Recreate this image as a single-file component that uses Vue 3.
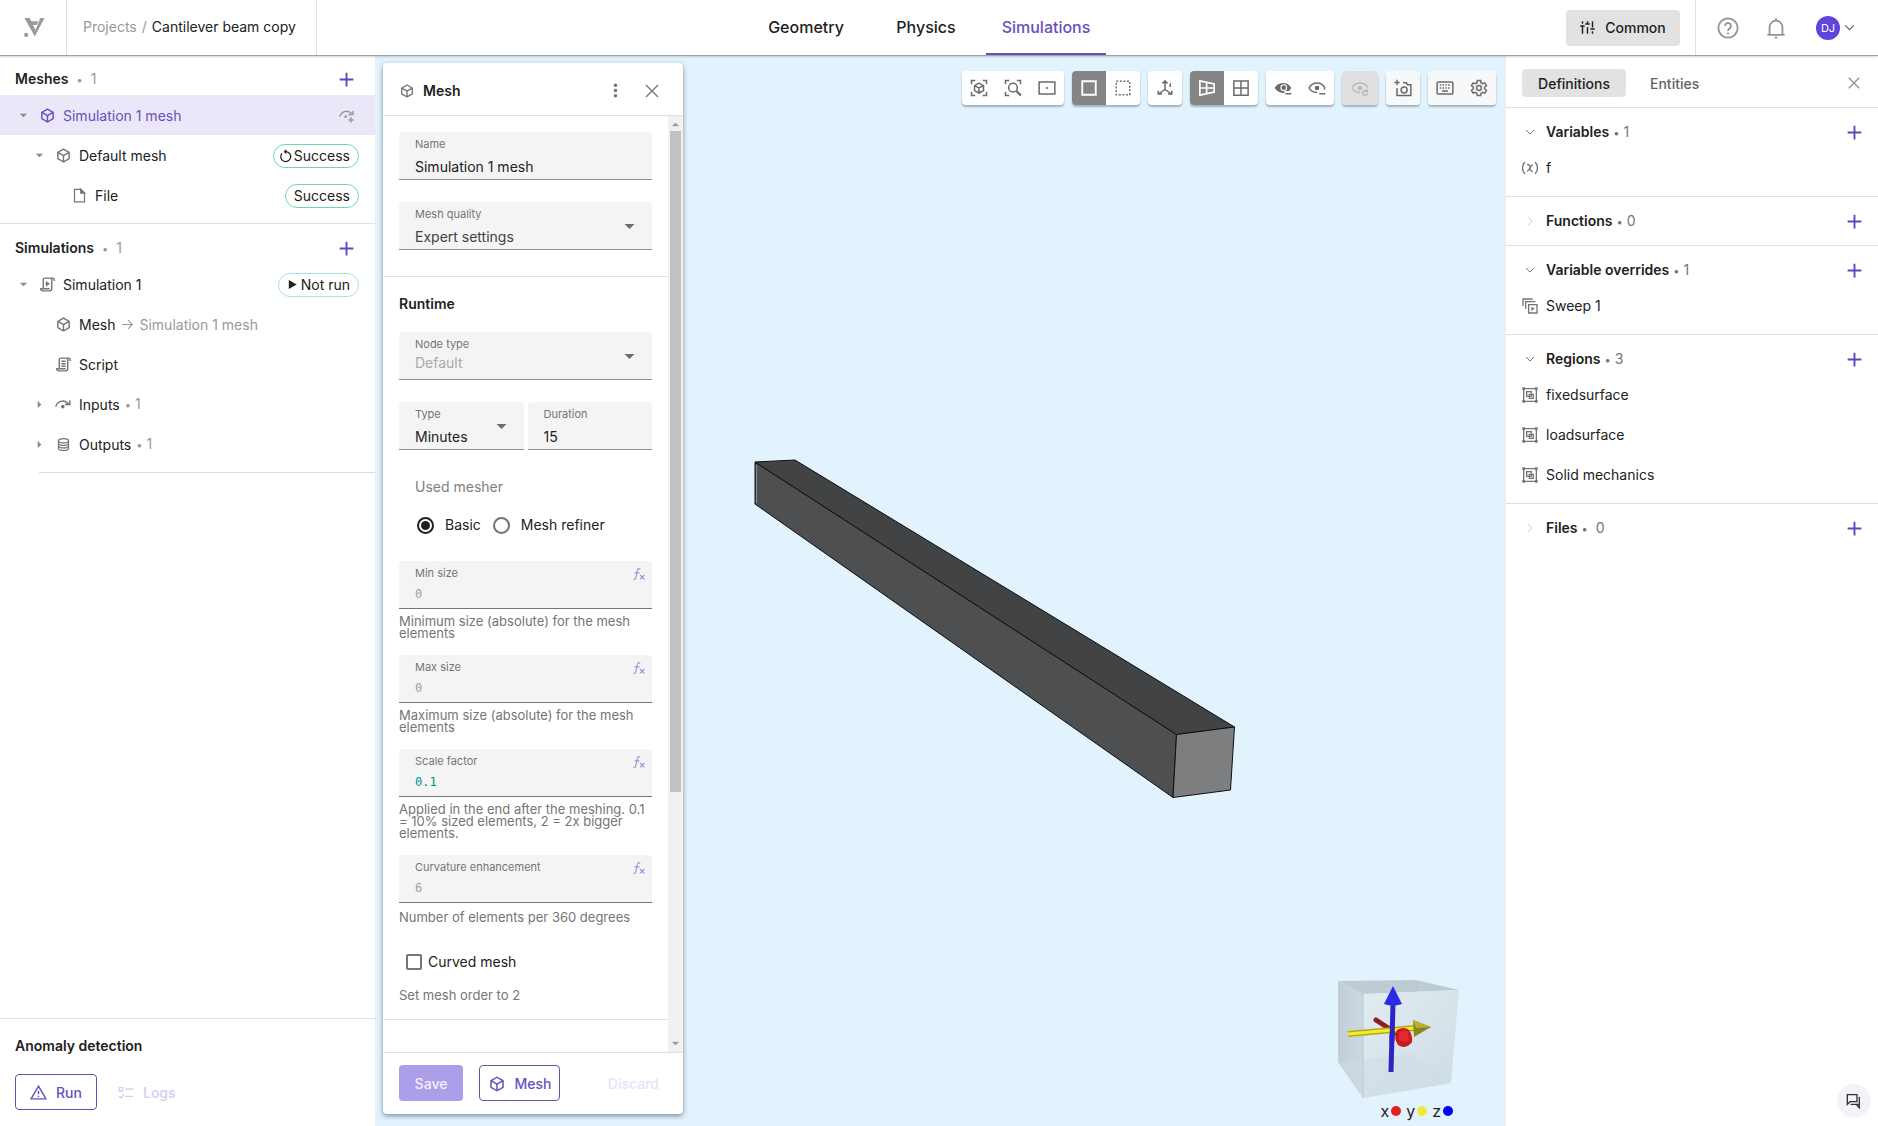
<script setup>
import { h, ref } from 'vue'

const cube = '<path fill="currentColor" stroke="none" d="M21,16.5C21,16.88 20.79,17.21 20.47,17.38L12.57,21.82C12.41,21.94 12.21,22 12,22C11.79,22 11.59,21.94 11.43,21.82L3.53,17.38C3.21,17.21 3,16.88 3,16.5V7.5C3,7.12 3.21,6.79 3.53,6.62L11.43,2.18C11.59,2.06 11.79,2 12,2C12.21,2 12.41,2.06 12.57,2.18L20.47,6.62C20.79,6.79 21,7.12 21,7.5V16.5M12,4.15L6.04,7.5L12,10.85L17.96,7.5L12,4.15M5,15.91L11,19.29V12.58L5,9.21V15.91M19,15.91V9.21L13,12.58V19.29L19,15.91Z"/>'
const corners = '<path d="M2 7V2h5M17 2h5v5M22 17v5h-5M7 22H2v-5"/>'
const scroll = '<path d="M6 18V5a2 2 0 0 1 2-2h11a2.5 2.5 0 0 1 2.5 2.5V7M18 3v15a3 3 0 0 1-3 3H5a2.5 2.5 0 0 1-2.5-2.5V18H14v1"/>'

const icons = {
  cube,
  logo: '<g fill="currentColor" stroke="none"><path d="M1.5 2h5.5l6 12.5L18 2h4.5L12.300 21.5z"/><path d="M5 5.5h11l-1.800 4H9.5l3.5 6-2 2.5z"/><circle cx="3.300" cy="19.700" r="2.200"/></g>',
  plus: '<path stroke-width="3" d="M12 1v22M1 12h22"/>',
  caretDown: '<path fill="currentColor" stroke="none" d="M4 8h16l-8 8z"/>',
  caretRight: '<path fill="currentColor" stroke="none" d="M8 4v16l8-8z"/>',
  chevronDown: '<path d="m4 8 8 8 8-8"/>',
  chevronRight: '<path d="m8 4 8 8-8 8"/>',
  file: '<path d="M4 2h10l6 6v14H4z"/><path fill="currentColor" d="M14 2v6h6z"/>',
  restart: '<path stroke-width="2.200" d="M5 7.500a8.500 8.500 0 1 0 7-3"/><path fill="currentColor" stroke="none" d="M12.500 0v9L8 4.500z"/>',
  play: '<path fill="currentColor" stroke="none" d="M4 2v20l17-10z"/>',
  scriptRun: scroll + '<path fill="currentColor" stroke="none" d="M9.500 7v8l6-4z"/>',
  script: scroll + '<path d="M9 7.500h6M9 11h6M9 14.500h6"/>',
  arrow: '<path d="M2 12h19M13 4l8 8-8 8"/>',
  input: '<path d="M1 15C3 8 12 3 20 12M14 12h7V6"/><circle cx="11" cy="15" r="1.500" fill="currentColor"/>',
  inputAdd: '<path d="M1 13C3 6 12 1 20 9M14 10h7V4M18 14v8M14 18h8"/><circle cx="10" cy="13" r="1" fill="currentColor"/>',
  database: '<ellipse cx="12" cy="6" rx="8" ry="3.500"/><path d="M4 6v12c0 2 4 3.500 8 3.500s8-1.500 8-3.500V6M4 10c0 2 4 3.500 8 3.500s8-1.500 8-3.500M4 14c0 2 4 3.500 8 3.500s8-1.500 8-3.500"/>',
  alert: '<path d="M12 3 1.500 21h21zM12 9.500v5M12 16.500v2"/>',
  logs: '<path d="M2 4h5v5H2zM11 6h12M11 17h12M1.500 16.500l3 3L9 14"/>',
  tune: '<path stroke-width="2.300" d="M4 2v4M4 10v12M.5 9.500h7M12 2v5M12 11v11M8.500 6.500h7M20 2v10M20 18v4M16.500 14.500h7"/>',
  help: '<circle cx="12" cy="12" r="10.500"/><path d="M8.800 9.800a3.200 3.200 0 1 1 5.500 2.200c-1.200 1.100-2.300 1.600-2.300 3.200M12 17v2"/>',
  bell: '<path d="M2.500 19.500h19M5 19V11a7 7 0 0 1 14 0v8M12 4V1M10.500 22.500h3"/>',
  close: '<path d="m3 3 18 18M21 3 3 21"/>',
  dots: '<g fill="currentColor" stroke="none"><circle cx="12" cy="3.500" r="2.800"/><circle cx="12" cy="12" r="2.800"/><circle cx="12" cy="20.500" r="2.800"/></g>',
  fx: '<path stroke-width="2.200" d="M1 20.500c3 1.500 4-1 5-6L8 5c.7-3.500 3-4.500 5.500-3M3 9h9M13 13l8 8M21 13l-8 8"/>',
  cubeScan: corners + '<path d="m12 5.500 6 3.300v6.600L12 18.700l-6-3.300V8.800zM6 8.800l6 3.200 6-3.200M12 12v6.700"/>',
  zoomScan: '<path d="M2 7V2h5M17 2h5v5M7 22H2v-5"/><circle cx="12" cy="11.500" r="5.800"/><path stroke-width="3" d="m16.500 16 6 6"/>',
  frame: '<path d="M1.500 4h21v16h-21z"/><circle cx="12" cy="12" r="1" fill="currentColor" stroke-width="1"/>',
  square: '<path stroke-width="2.500" d="M3 3h18v18H3z"/>',
  dotted: '<path stroke-dasharray="2.600 2.200" d="M3 3h18v18H3z"/>',
  axes: '<path d="M12 14V3M8.500 6 12 2.500 15.500 6M12 14l-9 6M3 15.500V20h5M12 14l9 6M21 15.500V20h-5M19 5.500v5M19 2.500V3"/>',
  perspective: '<path stroke-width="2.200" d="m2.500 2.500 19 4v11l-19 4zM2.500 12h19M11.500 4.500v15"/>',
  grid: '<path d="M2.500 2.500h19v19h-19zM12 2.500v19M2.500 12h19"/>',
  eyeSolid: '<path d="M1 12c4-9 18-9 22 0-2 4-5 6-9 6.500-6 .5-10.500-2-13-6.500z" fill="currentColor" stroke="none"/><circle cx="13" cy="11.500" r="3.800" stroke="#fff" fill="currentColor" stroke-width="1.500"/><path stroke="#fff" stroke-width="5" d="M14 18.500h10"/><path d="M15 19.500h8"/>',
  eye: '<path d="M12 18C7 18 3.500 16 1.500 12c4-9 17-9 21 0l-1 2M15 19.500h8"/><circle cx="12" cy="12" r="3" fill="currentColor" stroke="none"/>',
  eyeReset: '<path d="M12 18C7 18 3.500 16 1.500 12c4-9 17-9 21 0"/><circle cx="12" cy="12" r="3" fill="currentColor" stroke="none"/><path d="M20.500 16a3.200 3.200 0 1 0 1.500 3M21.500 13.500v3h-3"/>',
  camera: '<path d="M4 12v10h18.500V7.500H18L16.500 5H12M4 1v7M.500 4.500h7"/><circle cx="13.500" cy="14.500" r="4"/>',
  keyboard: '<rect x="1.500" y="4" width="21" height="16" rx="1.500"/><path stroke-dasharray="2 1.700" d="M5 8h15M5 12h15"/><path d="M8 16h8"/>',
  gear: '<path d="M9.800 2h4.400l.6 3.200 2 1.100 3-1.200 2.200 3.800-2.500 2.100v2l2.500 2.100-2.200 3.800-3-1.100-2 1.100-.6 3.100H9.800l-.6-3.100-2-1.100-3 1.100L2 15.100 4.500 13v-2L2 8.900l2.200-3.800 3 1.200 2-1.100z"/><circle cx="12" cy="12" r="3.200"/>',
  variable: '<path d="M4.500 3c-5 5-5 13 0 18M19.500 3c5 5 5 13 0 18M7.500 7c3.500-1 4.500 2 4.500 5s1 5 4.500 5M16.500 7c-3.500 0-5.500 9-9 10"/>',
  sweep: '<path d="M1.500 12V1.500H16M5.500 16V5.500H20M10 10h12.500v12.500H10z"/><path fill="currentColor" stroke="none" d="M14 13v6.500l5-3.200z"/>',
  region: '<path d="M2.500 2.500h19v19h-19z"/><path d="M7 7h7v7H7zM11 11h6v6h-6z"/><path stroke-width="4" d="M.500 2.500h4M19.500 2.500h4M.500 21.500h4M19.500 21.500h4"/>',
  chat: '<path d="M2 2.500h14.500V13H6l-4 4zM20 6v11H7M20 7v15l-4-4"/>'
}

const Icon = (props) => h('svg', {
  viewBox: '0 0 24 24',
  width: props.size || 17,
  height: props.size || 17,
  fill: 'none',
  stroke: 'currentColor',
  'stroke-width': 2,
  'aria-hidden': 'true',
  innerHTML: icons[props.name]
})
Icon.props = ['name', 'size']

const meshRows = [
  { level: 0, caret: 'caretDown', icon: 'cube', label: 'Simulation 1 mesh', selected: true },
  { level: 1, caret: 'caretDown', icon: 'cube', label: 'Default mesh', status: 'Success', statusIcon: 'restart' },
  { level: 2, icon: 'file', label: 'File', status: 'Success' }
]
const simulationRows = [
  { level: 0, caret: 'caretDown', icon: 'scriptRun', label: 'Simulation 1', status: 'Not run', statusIcon: 'play' },
  { level: 1, icon: 'cube', label: 'Mesh', target: 'Simulation 1 mesh' },
  { level: 1, icon: 'script', label: 'Script' },
  { level: 1, caret: 'caretRight', icon: 'input', label: 'Inputs', count: 1 },
  { level: 1, caret: 'caretRight', icon: 'database', label: 'Outputs', count: 1 }
]
const trees = [
  { title: 'Meshes', rows: meshRows },
  { title: 'Simulations', rows: simulationRows }
]

const definitions = [
  { title: 'Variables', count: 1, icon: 'variable', items: ['f'] },
  { title: 'Functions', count: 0, items: [] },
  { title: 'Variable overrides', count: 1, icon: 'sweep', items: ['Sweep 1'] },
  { title: 'Regions', count: 3, icon: 'region', items: ['fixedsurface', 'loadsurface', 'Solid mechanics'] },
  { title: 'Files', count: 0, spaced: true, items: [] }
]

const toolGroups = [
  [{ icon: 'cubeScan', label: 'Fit view' }, { icon: 'zoomScan', label: 'Zoom to selection' }, { icon: 'frame', label: 'Center' }],
  [{ icon: 'square', label: 'Solid', active: true }, { icon: 'dotted', label: 'Transparent' }],
  [{ icon: 'axes', label: 'Axes' }],
  [{ icon: 'perspective', label: 'Perspective', active: true }, { icon: 'grid', label: 'Orthographic' }],
  [{ icon: 'eyeSolid', label: 'Hide selected' }, { icon: 'eye', label: 'Hide others' }],
  [{ icon: 'eyeReset', label: 'Reset visibility', disabled: true }],
  [{ icon: 'camera', label: 'Screenshot', soft: true }],
  [{ icon: 'keyboard', label: 'Shortcuts', soft: true }, { icon: 'gear', label: 'Settings', soft: true }]
]

const form = ref({ name: 'Simulation 1 mesh', duration: '15', mesher: 'basic', curved: false })
const sizes = ref([
  { id: 'min', label: 'Min size', value: '', placeholder: '0', hint: 'Minimum size (absolute) for the mesh elements' },
  { id: 'max', label: 'Max size', value: '', placeholder: '0', hint: 'Maximum size (absolute) for the mesh elements' },
  { id: 'scale', label: 'Scale factor', value: '0.1', placeholder: '1', hint: 'Applied in the end after the meshing. 0.1 = 10% sized elements, 2 = 2x bigger elements.' },
  { id: 'curvature', label: 'Curvature enhancement', value: '', placeholder: '6', hint: 'Number of elements per 360 degrees', short: true }
])
</script>

<template>
  <div class="app">
    <header class="topbar">
      <div class="topbar-left">
        <a class="logo" href="#" aria-label="Home"><Icon name="logo" :size="23" /></a>
        <nav class="crumbs"><a href="#">Projects</a><span>/</span><strong>Cantilever beam copy</strong></nav>
      </div>
      <nav class="main-tabs">
        <a href="#">Geometry</a>
        <a href="#">Physics</a>
        <a href="#" class="active">Simulations</a>
      </nav>
      <div class="topbar-right">
        <button class="common" type="button"><Icon name="tune" :size="15" />Common</button>
        <div class="account">
          <button type="button" aria-label="Help"><Icon name="help" :size="22" /></button>
          <button type="button" aria-label="Notifications"><Icon name="bell" :size="22" /></button>
          <button type="button" class="user"><span class="avatar">DJ</span><Icon name="chevronDown" :size="13" /></button>
        </div>
      </div>
    </header>

    <div class="workspace">
      <aside class="sidebar">
        <section v-for="tree in trees" :key="tree.title" class="tree">
          <header class="tree-head">
            <h2>{{ tree.title }}</h2><span class="count wide"><i>•</i>1</span>
            <button type="button" class="add" :aria-label="'Add to ' + tree.title"><Icon name="plus" :size="15" /></button>
          </header>
          <div v-for="row in tree.rows" :key="row.label" class="tree-row" :class="['level-' + row.level, { selected: row.selected }]">
            <span class="caret"><Icon v-if="row.caret" :name="row.caret" :size="11" /></span>
            <Icon :name="row.icon" class="row-icon" :size="row.icon === 'database' || row.icon === 'file' ? 15 : 17" :class="{ small: row.icon === 'database' || row.icon === 'file' }" />
            <span class="row-label">{{ row.label }}</span>
            <span v-if="row.target" class="target"><Icon name="arrow" :size="13" />{{ row.target }}</span>
            <span v-if="row.count" class="count"><i>•</i>{{ row.count }}</span>
            <Icon v-if="row.selected" name="inputAdd" :size="16" class="row-action" />
            <span v-if="row.status" class="pill" :class="{ pending: row.status === 'Not run' }">
              <Icon v-if="row.statusIcon" :name="row.statusIcon" :size="row.statusIcon === 'play' ? 11 : 14" />{{ row.status }}
            </span>
          </div>
        </section>
        <section class="anomaly">
          <h2>Anomaly detection</h2>
          <div class="anomaly-actions">
            <button type="button" class="btn outline"><Icon name="alert" :size="17" />Run</button>
            <button type="button" class="btn ghost" disabled><Icon name="logs" :size="16" />Logs</button>
          </div>
        </section>
      </aside>

      <main class="viewport">
        <svg class="scene" viewBox="376 55 1129 1071" role="img" aria-label="Cantilever beam">
          <g stroke="#0c1012" stroke-width="1" stroke-linejoin="round">
            <path fill="#4e4f50" d="M755 462 1176.500 734.500 1173 797.500 755 504z" />
            <path fill="#424344" d="M755 462 795 460 1234.500 727 1176.500 734.500z" />
            <path fill="#7d7e7f" d="M1176.500 734.500 1234.500 727 1230.500 790 1173 797.500z" />
          </g>
          <path d="M756.500 465v38" stroke="#7b9296" />
        </svg>

        <div class="toolbar">
          <div v-for="(group, i) in toolGroups" :key="i" class="tool-group">
            <button v-for="tool in group" :key="tool.icon" type="button" :aria-label="tool.label" :disabled="tool.disabled" :class="{ active: tool.active, soft: tool.soft }">
              <Icon :name="tool.icon" :size="18" />
            </button>
          </div>
        </div>

        <section class="dialog">
          <header class="dialog-head">
            <Icon name="cube" :size="16" />
            <h2>Mesh</h2>
            <button type="button" aria-label="More"><Icon name="dots" :size="15" /></button>
            <button type="button" aria-label="Close"><Icon name="close" :size="16" /></button>
          </header>
          <div class="dialog-body">
            <form id="mesh-form" class="form" @submit.prevent>
              <div class="form-section first">
                <div class="field">
                  <label for="name">Name</label>
                  <input id="name" v-model="form.name" type="text" />
                </div>
                <div class="field muted">
                  <label for="quality">Mesh quality</label>
                  <select id="quality"><option>Expert settings</option></select>
                  <Icon name="caretDown" :size="15" class="field-caret" />
                </div>
              </div>
              <div class="form-section">
                <h3>Runtime</h3>
                <div class="field disabled">
                  <label for="node">Node type</label>
                  <select id="node" disabled><option>Default</option></select>
                  <Icon name="caretDown" :size="15" class="field-caret" />
                </div>
                <div class="pair">
                  <div class="field">
                    <label for="type">Type</label>
                    <select id="type"><option>Minutes</option></select>
                    <Icon name="caretDown" :size="15" class="field-caret" />
                  </div>
                  <div class="field">
                    <label for="duration">Duration</label>
                    <input id="duration" v-model="form.duration" type="text" />
                  </div>
                </div>
                <fieldset class="mesher">
                  <legend>Used mesher</legend>
                  <label><input v-model="form.mesher" type="radio" name="mesher" value="basic" />Basic</label>
                  <label><input v-model="form.mesher" type="radio" name="mesher" value="refiner" />Mesh refiner</label>
                </fieldset>
                <div v-for="size in sizes" :key="size.id" class="size">
                  <div class="field code">
                    <label :for="size.id">{{ size.label }}</label>
                    <input :id="size.id" v-model="size.value" type="text" :placeholder="size.placeholder" :aria-describedby="size.id + '-hint'" />
                    <Icon name="fx" :size="13" class="fx" />
                  </div>
                  <p :id="size.id + '-hint'" class="hint" :class="{ short: size.short }">{{ size.hint }}</p>
                </div>
                <label class="check"><input v-model="form.curved" type="checkbox" />Curved mesh</label>
                <p class="hint short">Set mesh order to 2</p>
              </div>
            </form>
            <div class="scrollbar" aria-hidden="true">
              <Icon name="caretDown" :size="11" class="up" />
              <div class="track"><div class="thumb"></div></div>
              <Icon name="caretDown" :size="11" />
            </div>
          </div>
          <footer class="dialog-foot">
            <button type="submit" form="mesh-form" class="btn save" disabled>Save</button>
            <button type="button" class="btn outline mesh"><Icon name="cube" :size="18" />Mesh</button>
            <button type="button" class="btn ghost discard" disabled>Discard</button>
          </footer>
        </section>

        <div class="orientation">
          <svg viewBox="1332 974 134 126" width="134" height="126" aria-hidden="true">
            <defs>
              <linearGradient id="side" x1="0" x2="1"><stop offset="0" stop-color="#c3ced6" /><stop offset="1" stop-color="#ccd8df" /></linearGradient>
              <linearGradient id="front" x1="0" x2="1" y1="0" y2="1"><stop offset="0" stop-color="#e0ebf2" /><stop offset="1" stop-color="#cfdbe2" /></linearGradient>
            </defs>
            <path fill="#bfcbd3" d="M1338 980 1416 979 1459 989 1363 993z" />
            <path fill="url(#side)" d="M1338 980 1363 993V1097L1338 1061z" />
            <path fill="url(#front)" d="M1363 993 1459 989 1451 1082 1363 1097z" />
            <path fill="#d0dce3" opacity=".5" d="M1338 1061 1413 1053 1451 1082 1363 1097z" />
            <path fill="none" stroke="#b4c0c9" stroke-width="1" opacity=".7" d="M1416 979v12M1363 993v104" />
            <path stroke="#8e2020" stroke-width="5" stroke-linecap="round" d="m1376 1019 20 13" />
            <path stroke="#2b25c4" stroke-width="5" d="m1391 1071 1-38" />
            <path stroke="#b3aa11" stroke-width="6" d="m1348 1033 67-6" />
            <path stroke="#f2ea35" stroke-width="3" d="m1348 1033 67-6" />
            <path fill="#8b861b" d="m1413 1019 18 7-17 10z" />
            <path fill="#b8b12a" d="m1413 1019 18 7-15 1z" />
            <path stroke="#2b25c4" stroke-width="5" d="m1392 1040 1-38" />
            <path fill="#2a2be6" d="m1393 985 9 18q-9 3-18 0z" />
            <path fill="#c61c20" d="M1397 1029q7-4 12 0 4 6 3 12-6 8-14 3-5-7-1-15z" />
            <path fill="#e32b2d" d="M1399 1031q6-3 9 0l1 9q-6 2-10-1z" />
          </svg>
          <p class="legend"><span>x<i class="x"></i></span><span>y<i class="y"></i></span><span>z<i class="z"></i></span></p>
        </div>
      </main>

      <aside class="inspector">
        <div class="inspector-tabs">
          <button type="button" class="active">Definitions</button>
          <button type="button">Entities</button>
          <button type="button" class="close" aria-label="Close panel"><Icon name="close" :size="14" /></button>
        </div>
        <section v-for="group in definitions" :key="group.title" class="group">
          <header class="group-head">
            <span class="group-icon" :class="{ faint: !group.items.length }"><Icon :name="group.items.length ? 'chevronDown' : 'chevronRight'" :size="12" /></span>
            <h2>{{ group.title }}</h2><span class="count dark" :class="{ spaced: group.spaced }"><i>•</i>{{ group.count }}</span>
            <button type="button" class="add" :aria-label="'Add to ' + group.title"><Icon name="plus" :size="15" /></button>
          </header>
          <div v-for="item in group.items" :key="item" class="group-row">
            <span class="group-icon"><Icon :name="group.icon" :size="16" /></span>{{ item }}
          </div>
        </section>
        <button type="button" class="chat" aria-label="Chat"><Icon name="chat" :size="16" /></button>
      </aside>
    </div>
  </div>
</template>

<style>
body {
  margin: 0;
}
</style>

<style scoped>
* {
  box-sizing: border-box;
}
.app {
  display: flex;
  flex-direction: column;
  height: 100vh;
  font-family: Inter, Roboto, "Liberation Sans", sans-serif;
  font-size: 14px;
  line-height: 20px;
  color: #212121;
  background: #fff;
  overflow: hidden;
}
h2, h3, p, fieldset, legend {
  margin: 0;
  padding: 0;
  border: 0;
}
h2, h3 {
  font-size: 14px;
  line-height: 20px;
  font-weight: 600;
}
a {
  color: inherit;
  text-decoration: none;
}
i {
  font-style: normal;
}
svg {
  flex: none;
  display: block;
}
button {
  padding: 0;
  border: 0;
  background: none;
  color: inherit;
  font: inherit;
  display: flex;
  align-items: center;
  justify-content: center;
}
input, select {
  font: inherit;
  color: inherit;
}

/* top bar */
.topbar {
  display: flex;
  flex: 0 0 55px;
  box-shadow: 0 1px 0 #a3a3a3, 0 1px 3px rgba(0, 0, 0, .3);
  position: relative;
  z-index: 2;
  background: #fff;
}
.topbar-left {
  display: flex;
  flex: 0 0 317px;
  border-right: 1px solid #e0e0e0;
}
.logo {
  display: flex;
  align-items: center;
  justify-content: center;
  width: 67px;
  border-right: 1px solid #e0e0e0;
  padding-left: 3px;
  color: #9a9a9a;
}
.crumbs {
  display: flex;
  gap: 5px;
  padding-left: 16px;
  line-height: 54px;
  white-space: nowrap;
  color: #9a9a9a;
}
.crumbs strong {
  font-weight: 400;
  color: #212121;
}
.main-tabs {
  display: flex;
  flex: 1;
  justify-content: center;
}
.main-tabs a {
  width: 120px;
  text-align: center;
  line-height: 54px;
  font-size: 16px;
  font-weight: 500;
}
.main-tabs .active {
  color: #6650c0;
  box-shadow: inset 0 -2px #6650b4;
}
.topbar-right {
  display: flex;
  align-items: center;
  justify-content: flex-end;
  flex: 0 0 343px;
}
.common {
  gap: 10px;
  width: 114px;
  height: 36px;
  margin-right: 15px;
  border-radius: 4px;
  background: #e2e2e2;
  font-weight: 500;
}
.account {
  display: flex;
  align-items: center;
  align-self: stretch;
  width: 183px;
  padding-left: 21px;
  gap: 26px;
  border-left: 1px solid #e0e0e0;
  color: #949494;
}
.user {
  gap: 3px;
  margin-left: 3px;
  color: #616161;
}
.avatar {
  width: 24px;
  height: 24px;
  border-radius: 50%;
  background: #6044dc;
  color: #fff;
  font-size: 11px;
  line-height: 24px;
}

.workspace {
  display: flex;
  flex: 1;
  min-height: 0;
}

/* left tree */
.sidebar {
  display: flex;
  flex-direction: column;
  flex: 0 0 376px;
  border-right: 1px solid #eceff1;
}
.tree {
  padding: 8px 0;
}
.tree + .tree {
  border-top: 1px solid #e0e0e0;
}
.tree + .tree::after {
  content: "";
  display: block;
  margin: 8px 0 0 39px;
  border-top: 1px solid #dcdcdc;
}
.tree-head {
  display: flex;
  align-items: center;
  height: 32px;
  padding: 0 21px 0 15px;
}
.add {
  margin-left: auto;
  color: #5f48bd;
}
.count {
  margin-left: 5px;
  color: #999;
}
.count i {
  margin-right: 4px;
  font-size: 11px;
}
.count.wide {
  margin-left: 8px;
}
.count.wide i {
  margin-right: 8px;
}
.count.dark {
  margin-left: 4px;
  color: #757575;
}
.count.spaced i {
  margin-right: 8px;
}
.tree-row {
  display: flex;
  align-items: center;
  height: 40px;
  padding: 1px 16px 0 15px;
}
.level-1 {
  padding-left: 31px;
}
.level-2 {
  padding-left: 47px;
}
.caret {
  display: flex;
  justify-content: center;
  width: 16px;
  color: #8c8c8c;
}
.row-icon {
  margin: 0 7px 0 8px;
  color: #757575;
}
.row-icon.small {
  margin: 0 8px 0 9px;
}
.selected {
  background: #ebe7f8;
  color: #6650c0;
}
.selected .row-icon {
  color: #6650c0;
}
.row-action {
  margin-left: auto;
  margin-right: 4px;
  color: #999;
}
.target {
  display: flex;
  align-items: center;
  gap: 5px;
  margin-left: 6px;
  color: #999;
}
.pill {
  display: flex;
  align-items: center;
  gap: 1px;
  height: 24px;
  margin-left: auto;
  padding: 0 8px;
  border: 1px solid #73d6ab;
  border-radius: 12px;
}
.pill svg {
  margin-left: -3px;
}
.pill.pending {
  border-color: #aadfe9;
}
.pending svg {
  margin: 0 2px 0 0;
}
.anomaly {
  margin-top: auto;
  padding: 17px 15px 16px;
  border-top: 1px solid #e0e0e0;
}
.anomaly-actions {
  display: flex;
  gap: 5px;
  margin-top: 18px;
}
.btn {
  gap: 9px;
  height: 36px;
  padding: 1px 16px 0;
  border-radius: 4px;
  font-weight: 500;
}
.outline {
  border: 1px solid #6650b4;
  color: #6650c0;
  padding: 1px 14px 0;
}
.anomaly .outline {
  width: 82px;
}
.ghost {
  color: #d5cdf2;
}
.btn.save {
  width: 64px;
  background: #ad9ee9;
  color: #f4f1fd;
}
.btn.mesh {
  width: 81px;
  margin-left: 16px;
  padding: 1px 0 0;
}
.btn.discard {
  margin-left: auto;
  padding: 1px 0 0;
  color: #e7e2f7;
}

/* 3D view */
.viewport {
  position: relative;
  flex: 1;
  min-width: 0;
  background: #e2f3fe;
}
.scene {
  width: 100%;
  height: 100%;
}
.toolbar {
  position: absolute;
  top: 16px;
  right: 9px;
  display: flex;
  gap: 8px;
  color: #6b6b6b;
}
.tool-group {
  display: flex;
  border-radius: 4px;
  background: #fff;
  overflow: hidden;
  box-shadow: 0 2px 2px rgba(60, 80, 95, .4);
}
.tool-group button {
  width: 34px;
  height: 34px;
}
.tool-group .active {
  background: #858585;
  color: #fff;
}
.tool-group .soft {
  background: #f7f8f9;
}
.tool-group button:disabled {
  width: 36px;
  background: #dfdfdf;
  color: #b9b9b9;
}
.orientation {
  position: absolute;
  right: 39px;
  bottom: 5px;
}
.legend {
  display: flex;
  justify-content: flex-end;
  gap: 5px;
  padding-right: 13px;
  font-size: 16px;
}
.legend span {
  display: flex;
  align-items: center;
  gap: 2px;
}
.legend i {
  width: 10px;
  height: 10px;
  border-radius: 50%;
}
.x {
  background: #e51e1e;
}
.y {
  background: #f0e83c;
}
.z {
  background: #0000f5;
}

/* mesh dialog */
.dialog {
  position: absolute;
  top: 8px;
  bottom: 12px;
  left: 7px;
  display: flex;
  flex-direction: column;
  width: 300px;
  border-radius: 4px;
  background: #fff;
  box-shadow: 0 2px 5px rgba(40, 60, 75, .55);
}
.dialog-head {
  display: flex;
  align-items: center;
  flex: 0 0 53px;
  padding: 3px 23px 0 16px;
  border-bottom: 1px solid #dfe3e3;
  color: #757575;
}
.dialog-head h2 {
  margin: 0 auto 0 8px;
  color: #212121;
}
.dialog-head button + button {
  margin-left: 21px;
}
.dialog-body {
  display: flex;
  flex: 1;
  min-height: 0;
}
.form {
  flex: 1;
  overflow: hidden;
}
.form-section {
  padding: 17px 16px 16px;
  border-bottom: 1px solid #dfe3e3;
}
.form-section.first {
  padding: 16px 16px 26px;
}
.form-section h3 {
  margin-bottom: 18px;
}
.field {
  position: relative;
  display: flex;
  flex-direction: column;
  height: 48px;
  padding: 5px 16px 0;
  border-bottom: 1px solid #8f8f8f;
  border-radius: 4px 4px 0 0;
  background: #f4f4f4;
}
.field + .field, .pair {
  margin-top: 22px;
}
.field label {
  font-size: 11px;
  line-height: 15px;
  color: #757575;
}
.field input, .field select {
  flex: none;
  width: 100%;
  height: 29px;
  padding: 0;
  border: 0;
  outline: 0;
  background: none;
  appearance: none;
}
.field.muted select {
  color: #424242;
}
.field.disabled select {
  height: 22px;
  color: #aaa;
  opacity: 1;
}
.field.code {
  border-color: #757575;
}
.field.code input {
  height: 25px;
  font-family: "DejaVu Sans Mono", monospace;
  font-size: 12px;
  color: #009688;
}
.field.code input::placeholder {
  color: #9e9e9e;
}
.field-caret {
  position: absolute;
  right: 15px;
  top: 17px;
  color: #6b6b6b;
  pointer-events: none;
}
.fx {
  position: absolute;
  right: 6px;
  top: 7px;
  color: #a393dc;
}
.pair {
  display: flex;
  gap: 4px;
}
.pair .field {
  flex: 1;
  margin-top: 0;
}
.mesher {
  display: flex;
  align-items: center;
  flex-wrap: wrap;
  gap: 12px;
  padding-left: 18px;
  margin: 27px 0 26px;
}
.mesher legend {
  margin-left: -2px;
  padding-bottom: 18px;
  color: #808080;
}
.mesher label {
  display: flex;
  align-items: center;
  gap: 11px;
}
.mesher input {
  display: grid;
  place-content: center;
  width: 17px;
  height: 17px;
  margin: 0;
  border: 2px solid #757575;
  border-radius: 50%;
  appearance: none;
}
.mesher input:checked {
  border-color: #212121;
}
.mesher input:checked::before {
  content: "";
  width: 9px;
  height: 9px;
  border-radius: 50%;
  background: #212121;
}
.size + .size {
  margin-top: 16px;
}
.hint {
  margin-top: 6px;
  font-size: 13px;
  line-height: 12px;
  color: #757575;
}
.hint.short {
  line-height: 16px;
}
.check {
  display: flex;
  align-items: center;
  gap: 6px;
  margin: 27px 0 15px 7px;
}
.check input {
  width: 16px;
  height: 16px;
  margin: 0;
  border: 2px solid #757575;
  border-radius: 2px;
  appearance: none;
}
.scrollbar {
  display: flex;
  flex-direction: column;
  align-items: center;
  justify-content: space-between;
  width: 15px;
  padding: 3px 0;
  background: #f1f1f1;
  color: #9a9a9a;
}
.up {
  transform: rotate(180deg);
}
.track {
  flex: 1;
  width: 11px;
  margin: 1px 0;
}
.thumb {
  height: 73%;
  background: #c1c1c1;
}
.dialog-foot {
  display: flex;
  flex: 0 0 62px;
  padding: 12px 24px 0 16px;
  border-top: 1px solid #dfe3e3;
}

/* definitions panel */
.inspector {
  position: relative;
  flex: 0 0 373px;
  border-left: 1px solid #eceff1;
}
.inspector-tabs {
  display: flex;
  align-items: center;
  height: 53px;
  padding: 4px 17px 0 16px;
  border-bottom: 1px solid #e0e0e0;
  font-weight: 500;
  color: #616161;
}
.inspector-tabs button {
  height: 28px;
  padding: 1px 24px 0;
  border-radius: 4px;
}
.inspector-tabs .active {
  width: 104px;
  padding: 1px 0 0;
  background: #e2e2e2;
  color: #212121;
}
.inspector-tabs .close {
  margin-left: auto;
  padding: 0;
  color: #8a8a8a;
}
.group {
  padding: 8px 16px;
  border-bottom: 1px solid #e0e0e0;
}
.group:nth-last-child(2) {
  border-bottom: 0;
}
.group-head {
  display: flex;
  align-items: center;
  height: 32px;
}
.group-row {
  display: flex;
  align-items: center;
  height: 40px;
}
.group-icon {
  display: flex;
  justify-content: center;
  width: 16px;
  margin-right: 8px;
  color: #757575;
}
.group-icon.faint {
  color: #d0d0d0;
}
.chat {
  position: absolute;
  right: 7px;
  bottom: 8px;
  width: 34px;
  height: 34px;
  border-radius: 50%;
  background: #f3f4fa;
  color: #333;
}
</style>
